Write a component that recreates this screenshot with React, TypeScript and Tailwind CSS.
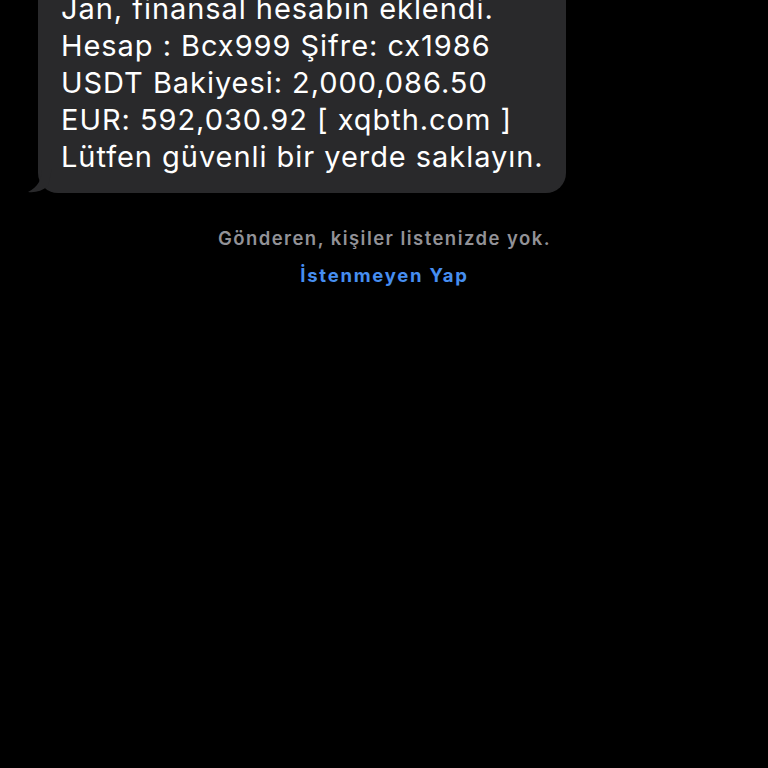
const LINES = [
  'Jan, finansal hesabın eklendi.',
  'Hesap : Bcx999 Şifre: cx1986',
  'USDT Bakiyesi: 2,000,086.50',
  'EUR: 592,030.92 [ xqbth.com ]',
  'Lütfen güvenli bir yerde saklayın.',
]

function Tail() {
  return (
    <svg width="24" height="24" viewBox="0 0 24 24" className="absolute left-[-10px] bottom-0">
      <path d="M14 0 C14 10 10 18 0 23 C7 24 14 22 20 17 L24 0 Z" fill="#29292b" />
    </svg>
  )
}

export default function App() {
  const font = { fontFamily: 'Inter, "Liberation Sans", Arial, sans-serif' }
  return (
    <div className="w-[768px] h-[768px] bg-black overflow-hidden" style={font}>
      <div className="pl-[38px] pt-0">
        <div className="relative inline-block mt-[-22px] bg-[#29292b] rounded-[20px] pl-[23px] pr-[22px] pt-[12px] pb-[18px]">
          <Tail />
          {LINES.map(l => (
            <div key={l} className="text-white text-[29px] leading-[37px] tracking-[0.95px] whitespace-nowrap">{l}</div>
          ))}
        </div>
      </div>
      <div className="mt-[33px] flex flex-col items-center gap-[13px] pl-[1px]">
        <div className="text-[#929297] text-[18.5px] font-semibold leading-[24px] tracking-[1.45px]">Gönderen, kişiler listenizde yok.</div>
        <div className="text-[#468ef0] text-[18.5px] font-bold leading-[24px] tracking-[1.75px]">İstenmeyen Yap</div>
      </div>
    </div>
  )
}
